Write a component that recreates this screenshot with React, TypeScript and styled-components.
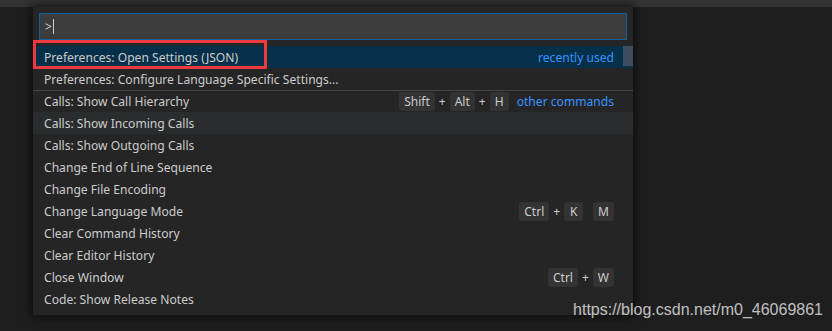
import React from 'react';
import styled, { createGlobalStyle } from 'styled-components';

type Key = string[];

type Command = {
  label: string;
  keys?: Key[];
  note?: string;
  selected?: boolean;
  hovered?: boolean;
  separator?: boolean;
};

const commands: Command[] = [
  { label: 'Preferences: Open Settings (JSON)', note: 'recently used', selected: true },
  { label: 'Preferences: Configure Language Specific Settings...' },
  { label: 'Calls: Show Call Hierarchy', keys: [['Shift', 'Alt', 'H']], note: 'other commands', separator: true },
  { label: 'Calls: Show Incoming Calls', hovered: true },
  { label: 'Calls: Show Outgoing Calls' },
  { label: 'Change End of Line Sequence' },
  { label: 'Change File Encoding' },
  { label: 'Change Language Mode', keys: [['Ctrl', 'K'], ['M']] },
  { label: 'Clear Command History' },
  { label: 'Clear Editor History' },
  { label: 'Close Window', keys: [['Ctrl', 'W']] },
  { label: 'Code: Show Release Notes' },
];

const App: React.FC = () => {
  return (
    <>
      <GlobalStyle />
      <Layout>
        <TabStrip />
        <Editor>
          <Palette>
            <InputBox>
              <Prompt>&gt;</Prompt>
              <Caret />
            </InputBox>
            <List>
              {commands.map((c) => (
                <Row
                  key={c.label}
                  $selected={c.selected}
                  $hovered={c.hovered}
                  $separator={c.separator}
                >
                  <Label>{c.label}</Label>
                  <Right>
                    {c.keys && (
                      <Keys>
                        {c.keys.map((chord, i) => (
                          <Chord key={i}>
                            {chord.map((k, j) => (
                              <React.Fragment key={k}>
                                {j > 0 && <Plus>+</Plus>}
                                <Cap>{k}</Cap>
                              </React.Fragment>
                            ))}
                          </Chord>
                        ))}
                      </Keys>
                    )}
                    {c.note && <Note>{c.note}</Note>}
                  </Right>
                  {c.selected && <ScrollThumb />}
                </Row>
              ))}
            </List>
            <Highlight />
          </Palette>
        </Editor>
        <Watermark>https://blog.csdn.net/m0_46069861</Watermark>
      </Layout>
    </>
  );
};

const GlobalStyle = createGlobalStyle`
  html, body {
    margin: 0;
    padding: 0;
    background: #1e1e1e;
  }
  body {
    font-family: "Noto Sans", "Open Sans", sans-serif;
  }
`;

const Layout = styled.main`
  position: relative;
  width: 832px;
  height: 331px;
  overflow: hidden;
  background: #1e1e1e;
  display: flex;
  flex-direction: column;
`;

const TabStrip = styled.div`
  height: 7px;
  background: #333333;
`;

const Editor = styled.div`
  flex: 1;
  padding-left: 33px;
`;

const Palette = styled.div`
  position: relative;
  width: 600px;
  padding: 6px 0 5px;
  background: #252526;
  box-shadow: 0 0 8px 2px rgba(0, 0, 0, 0.6);
`;

const InputBox = styled.div`
  margin: 0 6px 6px;
  height: 25px;
  background: #3c3c3c;
  border: 1px solid #0e639c;
  display: flex;
  align-items: center;
  padding-left: 5px;
  color: #cccccc;
  font-size: 12px;
`;

const Prompt = styled.span`
  line-height: 1;
`;

const Caret = styled.span`
  width: 1px;
  height: 15px;
  margin-left: 1px;
  background: #cccccc;
`;

const List = styled.div`
  display: flex;
  flex-direction: column;
`;

const Row = styled.div<{ $selected?: boolean; $hovered?: boolean; $separator?: boolean }>`
  position: relative;
  height: 22px;
  box-sizing: border-box;
  display: flex;
  align-items: center;
  justify-content: space-between;
  padding: 0 19px 0 11px;
  color: #cccccc;
  font-size: 12.1px;
  background: ${(p) => (p.$selected ? '#062f4a' : p.$hovered ? '#2a2d2e' : 'transparent')};
  border-top: ${(p) => (p.$separator ? '1px solid #454545' : 'none')};
`;

const Label = styled.span`
  white-space: nowrap;
`;

const Right = styled.div`
  display: flex;
  align-items: center;
  gap: 8px;
`;

const Keys = styled.div`
  display: flex;
  align-items: center;
  gap: 10px;
`;

const Chord = styled.div`
  display: flex;
  align-items: center;
`;

const Cap = styled.span`
  min-width: 19px;
  height: 19px;
  box-sizing: border-box;
  padding: 0 5px;
  display: inline-flex;
  align-items: center;
  justify-content: center;
  border-radius: 3px;
  background: #333334;
  font-size: 12px;
  color: #cccccc;
`;

const Plus = styled.span`
  margin: 0 4px;
  font-size: 12px;
  color: #cccccc;
`;

const Note = styled.span`
  color: #3794ff;
`;

const ScrollThumb = styled.div`
  position: absolute;
  right: 0;
  top: 0;
  width: 10px;
  height: 20px;
  background: #3b4d5e;
`;

const Highlight = styled.div`
  position: absolute;
  left: 0;
  top: 33px;
  width: 228px;
  height: 23px;
  border: 3px solid #ee3a3f;
`;

const Watermark = styled.div`
  position: absolute;
  right: 9px;
  bottom: 12px;
  font-family: "Liberation Sans", Arial, sans-serif;
  font-size: 16px;
  color: rgba(230, 230, 230, 0.82);
`;

export default App;
